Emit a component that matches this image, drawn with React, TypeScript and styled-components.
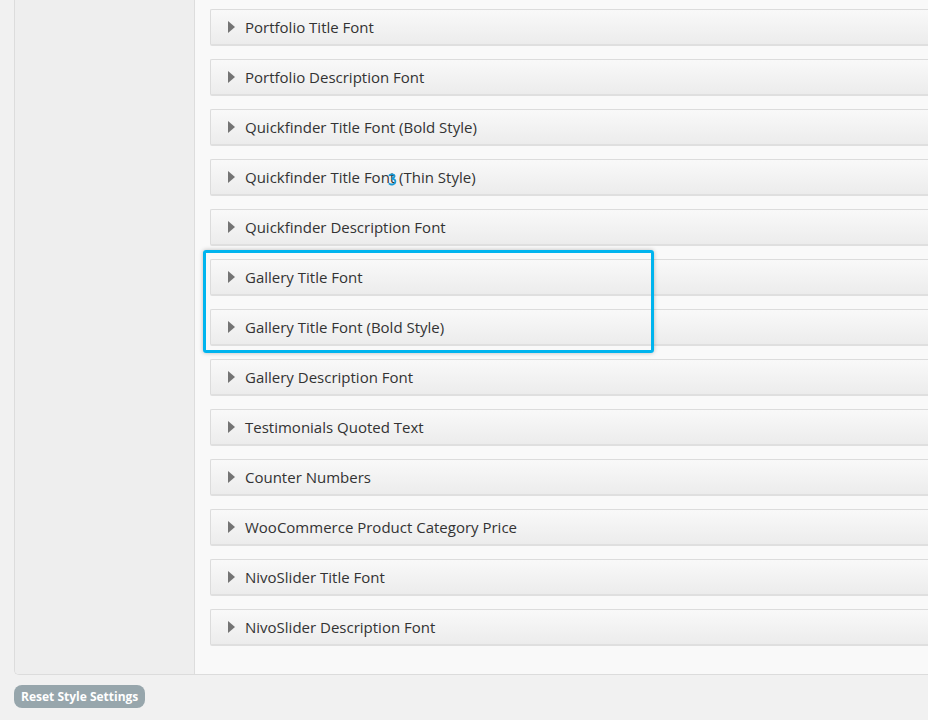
import React from 'react'
import styled, { createGlobalStyle } from 'styled-components'

const GlobalStyle = createGlobalStyle`
  html, body {
    margin: 0;
    background: #f1f1f1;
    overflow: hidden;
    font-family: 'Open Sans', 'Noto Sans', sans-serif;
  }
`

const sections = [
  'Portfolio Title Font',
  'Portfolio Description Font',
  'Quickfinder Title Font (Bold Style)',
  'Quickfinder Title Font (Thin Style)',
  'Quickfinder Description Font',
  'Gallery Title Font',
  'Gallery Title Font (Bold Style)',
  'Gallery Description Font',
  'Testimonials Quoted Text',
  'Counter Numbers',
  'WooCommerce Product Category Price',
  'NivoSlider Title Font',
  'NivoSlider Description Font',
]

const highlighted = ['Gallery Title Font', 'Gallery Title Font (Bold Style)']

function Section({ title }: { title: string }) {
  return (
    <Row>
      <Arrow />
      <Label>{title}</Label>
      {title.includes('Thin') && (
        <Cursor viewBox="0 0 9 13" width="9" height="13">
          <path d="M1.5 2.2 C3 0.8 6.5 1 6.6 3 C6.7 4.6 4.8 5.2 3.6 5.6 C5.4 5.8 7.6 6.6 7.4 8.8 C7.2 11.4 3.4 12.2 1.4 10.8" fill="none" stroke="#1a9ad6" strokeWidth="1.8" strokeLinecap="round" />
        </Cursor>
      )}
    </Row>
  )
}

export default function App() {
  const before = sections.slice(0, 5)
  const after = sections.slice(7)
  return (
    <>
      <GlobalStyle />
      <Page>
        <Panel>
          <Sidebar />
          <Content>
            {before.map((s) => (
              <Section key={s} title={s} />
            ))}
            <Highlight>
              {highlighted.map((s) => (
                <Section key={s} title={s} />
              ))}
            </Highlight>
            {after.map((s) => (
              <Section key={s} title={s} />
            ))}
          </Content>
        </Panel>
        <ResetButton>Reset Style Settings</ResetButton>
      </Page>
    </>
  )
}

const Page = styled.div`
  padding-left: 14px;
  width: 1100px;
`

const Panel = styled.div`
  display: grid;
  grid-template-columns: 180px 1fr;
  border: 1px solid #dcdcdc;
  border-top: none;
  border-right: none;
  border-radius: 0 0 0 5px;
  overflow: hidden;
  box-sizing: border-box;
`

const Sidebar = styled.div`
  background: #eeeeee;
  border-right: 1px solid #dddddd;
`

const Content = styled.div`
  background: #f9f9f9;
  padding: 9px 0 28px 15px;
  display: flex;
  flex-direction: column;
  gap: 13px;
`

const Highlight = styled.div`
  position: relative;
  display: flex;
  flex-direction: column;
  gap: 13px;

  &::after {
    content: '';
    position: absolute;
    left: -7px;
    top: -9px;
    width: 451px;
    bottom: -7px;
    box-sizing: border-box;
    border: 3px solid #00b4ee;
    border-radius: 3px;
    box-shadow: 0 0 4px rgba(0, 0, 0, 0.25);
    pointer-events: none;
  }
`

const Row = styled.div`
  position: relative;
  height: 37px;
  box-sizing: border-box;
  display: flex;
  align-items: center;
  padding-left: 17px;
  border: 1px solid #dcdcdc;
  border-bottom: 2px solid #dfdfdf;
  border-right: none;
  border-radius: 2px 0 0 2px;
  background: linear-gradient(to bottom, #f9f9f9, #ececec);
`

const Arrow = styled.span`
  width: 0;
  height: 0;
  border-top: 6px solid transparent;
  border-bottom: 6px solid transparent;
  border-left: 7px solid #747474;
  margin-right: 10px;
`

const Label = styled.span`
  font-size: 15px;
  color: #333333;
  line-height: 20px;
`

const Cursor = styled.svg`
  position: absolute;
  left: 177px;
  top: 13px;
`

const ResetButton = styled.button`
  margin-top: 10px;
  height: 23px;
  padding: 0 7px;
  border: none;
  border-radius: 8px;
  background: #97a6ac;
  color: #ffffff;
  font-family: 'Open Sans', 'Noto Sans', sans-serif;
  font-weight: 700;
  font-size: 12px;
  line-height: 23px;
`
